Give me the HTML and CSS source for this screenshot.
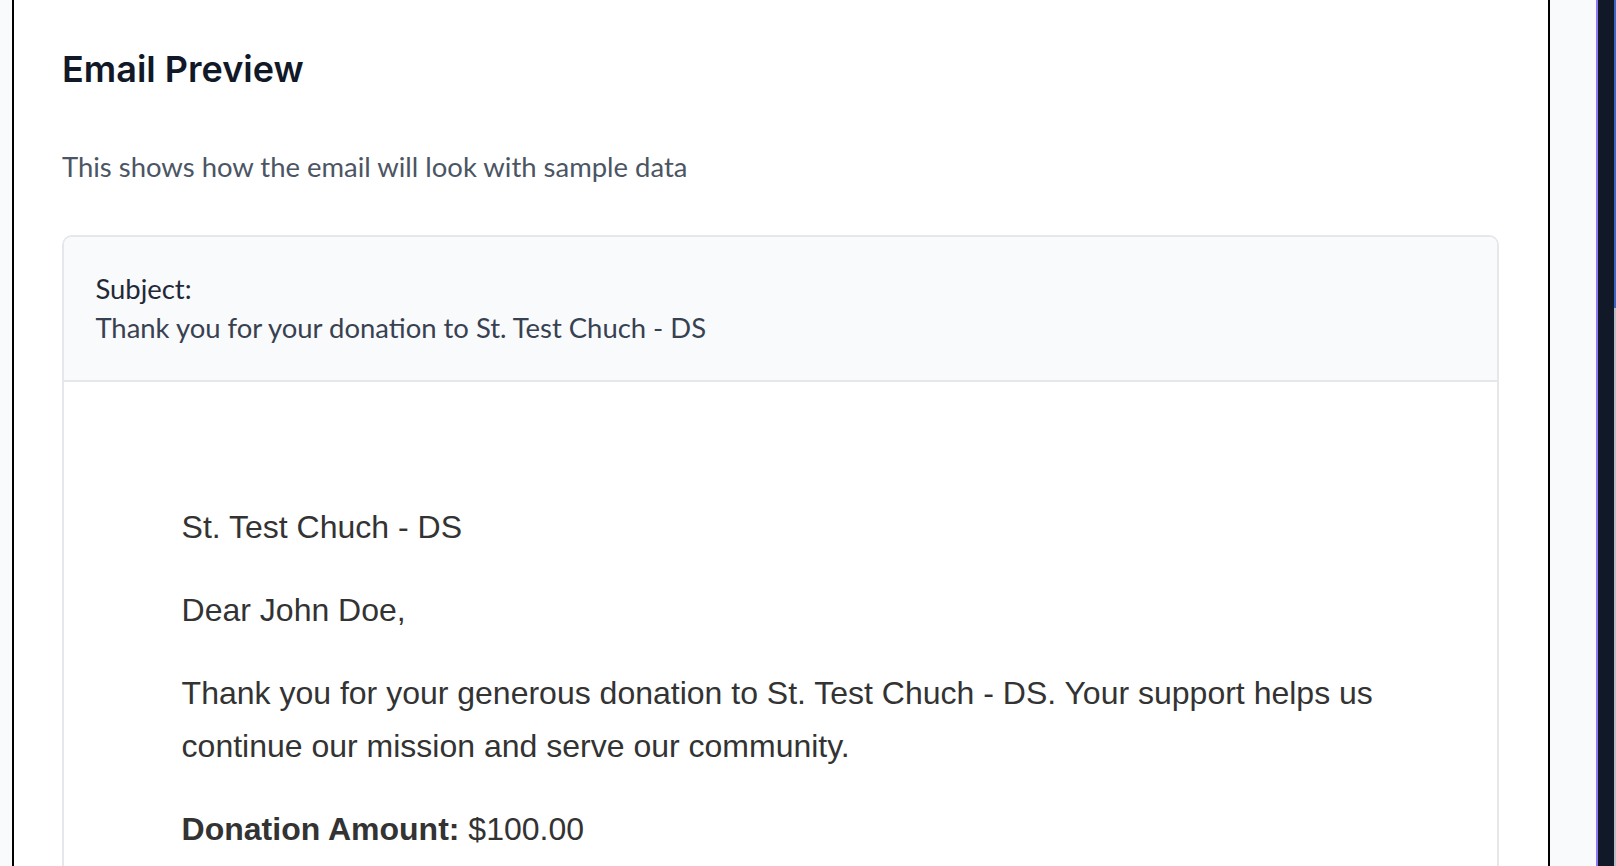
FILE: index.html
```html
<!DOCTYPE html>
<html lang="en">
<head>
<meta charset="utf-8">
<title>Email Preview</title>
<link rel="stylesheet" href="styles.css">
</head>
<body>
<div class="screen">
  <div class="gutter"></div>
  <section class="panel">
    <h2 class="panel-title">Email Preview</h2>
    <p class="panel-desc">This shows how the email will look with sample data</p>
    <div class="preview-card">
      <div class="preview-head">
        <div class="subject-label">Subject:</div>
        <div class="subject-text">Thank you for your donation to St. Test Chuch - DS</div>
      </div>
      <div class="preview-body">
        <div class="email">
          <p>St. Test Chuch - DS</p>
          <p>Dear John Doe,</p>
          <p>Thank you for your generous donation to St. Test Chuch - DS. Your support helps us continue our mission and serve our community.</p>
          <p><strong>Donation Amount:</strong> $100.00</p>
        </div>
      </div>
    </div>
  </section>
  <div class="side-gap"></div>
  <div class="side-strip"></div>
  <div class="edge-strip"></div>
</div>
</body>
</html>
```

FILE: styles.css
```css
* { box-sizing: border-box; }
html, body {
  margin: 0;
  padding: 0;
  height: 100%;
  overflow: hidden;
  background: #f9fafb;
}
.screen {
  display: flex;
  height: 866px;
  width: 1616px;
}
.gutter {
  width: 12px;
  flex: none;
}
.panel {
  flex: none;
  width: 1538px;
  background: #ffffff;
  border-left: 2px solid #000;
  border-right: 2px solid #000;
  padding: 42px 49px 0 48px;
  overflow: hidden;
}
.panel-title {
  margin: 0;
  font-family: Inter, "Noto Sans", sans-serif;
  font-weight: 600;
  font-size: 36px;
  line-height: 54px;
  color: #111827;
}
.panel-desc {
  margin: 51px 0 0 0;
  font-family: Lato, "Noto Sans", sans-serif;
  font-size: 27.44px;
  line-height: 40px;
  color: #4b5563;
}
.preview-card {
  margin-top: 48px;
  border: 2px solid #e5e7eb;
  border-radius: 10px 10px 0 0;
  border-bottom: none;
  overflow: hidden;
}
.preview-head {
  background: #f9fafb;
  border-bottom: 2px solid #e5e7eb;
  padding: 32px 31.4px 32.5px;
  font-family: Lato, "Noto Sans", sans-serif;
  font-size: 27.44px;
  line-height: 39.2px;
}
.subject-label {
  color: #1f2937;
}
.subject-text {
  color: #374151;
}
.preview-body {
  background: #fff;
  padding: 31.4px;
}
.email {
  padding: 87.5px 86.2px;
  font-family: "Liberation Sans", Arial, sans-serif;
  font-size: 32px;
  line-height: 52.4px;
  color: #333333;
}
.email p {
  margin: 0 0 30.9px 0;
}
.side-gap {
  width: 46px;
  flex: none;
}
.side-strip {
  width: 18px;
  flex: none;
  background: #111827;
  border-left: 2px solid #8b7cf6;
}
.edge-strip {
  flex: 1;
  background: linear-gradient(#3867c4 0, #3867c4 308px, #b8bcc4 308px);
}
```
